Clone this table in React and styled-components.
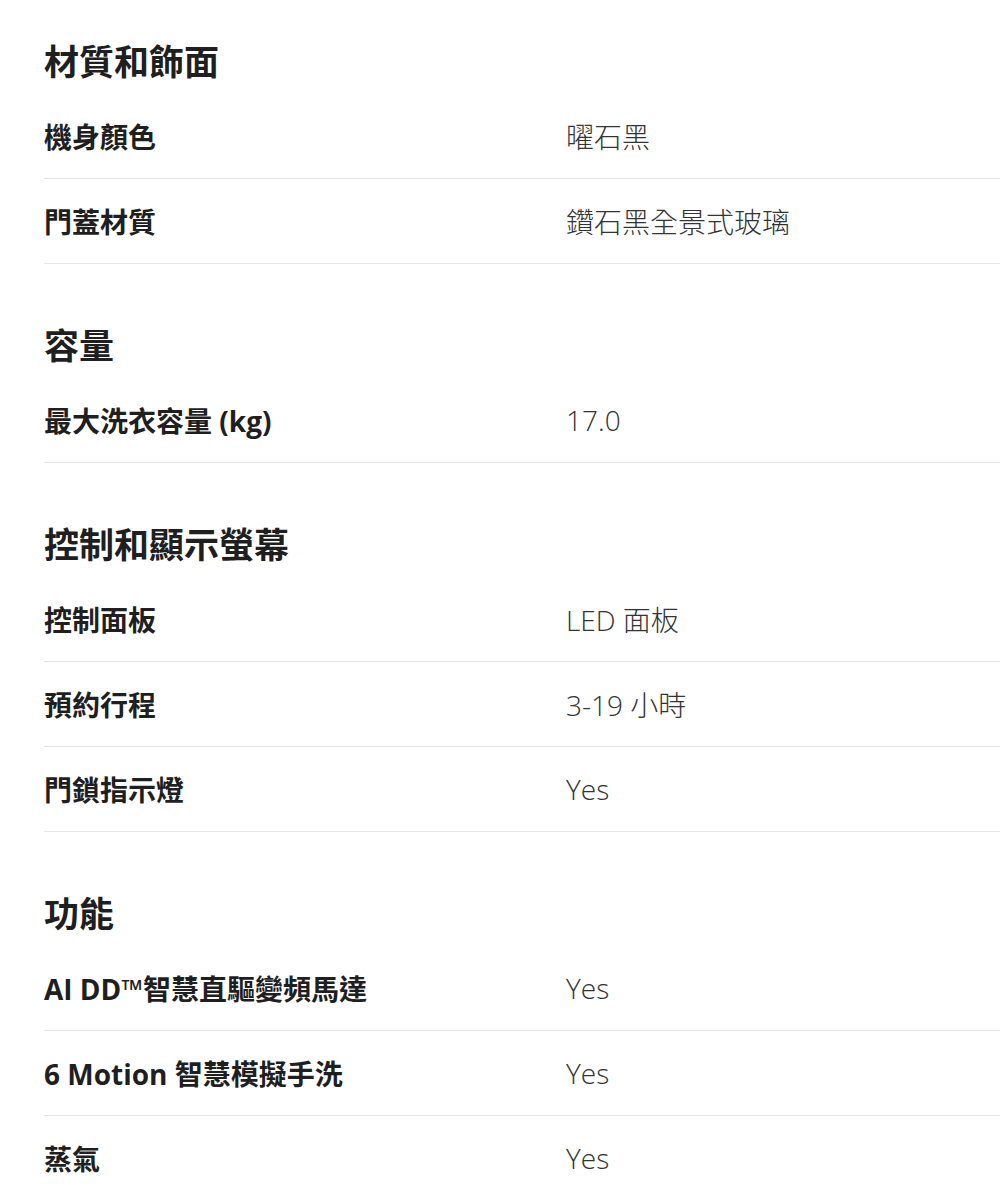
import React from 'react'
import styled, {createGlobalStyle} from 'styled-components'

const specs = [
    {
        title: '材質和飾面',
        rows: [
            ['機身顏色', '曜石黑'],
            ['門蓋材質', '鑽石黑全景式玻璃'],
        ],
    },
    {
        title: '容量',
        rows: [['最大洗衣容量 (kg)', '17.0']],
    },
    {
        title: '控制和顯示螢幕',
        rows: [
            ['控制面板', 'LED 面板'],
            ['預約行程', '3-19 小時'],
            ['門鎖指示燈', 'Yes'],
        ],
    },
    {
        title: '功能',
        rows: [
            ['AI DD™智慧直驅變頻馬達', 'Yes'],
            ['6 Motion 智慧模擬手洗', 'Yes'],
            ['蒸氣', 'Yes'],
        ],
    },
]

const App = () => {
    return (
        <>
            <GlobalStyle />
            <SpecList>
                {specs.map((section, i) => (
                    <Section key={section.title} first={i === 0}>
                        <SectionTitle>{section.title}</SectionTitle>
                        {section.rows.map(([label, value]) => (
                            <SpecRow key={label}>
                                <SpecLabel>{label}</SpecLabel>
                                <SpecValue>{value}</SpecValue>
                            </SpecRow>
                        ))}
                    </Section>
                ))}
            </SpecList>
        </>
    )
}

export default App

const GlobalStyle = createGlobalStyle`
    body {
        margin: 0;
        background: #fff;
        font-family: "Open Sans", "Noto Sans CJK TC", sans-serif;
        overflow: hidden;
    }
`
const SpecList = styled.div`
    padding: 38px 0 0 44px;
    width: 1000px;
    box-sizing: border-box;
`
const Section = styled.section`
    margin-top: ${props => (props.first ? '0' : '58px')};
`
const SectionTitle = styled.h2`
    margin: 0 0 8px;
    height: 48px;
    line-height: 48px;
    font-size: 35px;
    font-weight: 700;
    color: #1f1f1f;
    font-family: "Open Sans", "Noto Sans CJK TC", sans-serif;
`
const SpecRow = styled.div`
    display: grid;
    grid-template-columns: 522px 1fr;
    align-items: center;
    height: 84px;
    border-bottom: 1px solid #e6e6e6;
`
const SpecLabel = styled.div`
    font-size: 28px;
    font-weight: 700;
    color: #1f1f1f;
    white-space: nowrap;
`
const SpecValue = styled.div`
    font-size: 28px;
    font-weight: 300;
    color: #333;
    white-space: nowrap;
`
